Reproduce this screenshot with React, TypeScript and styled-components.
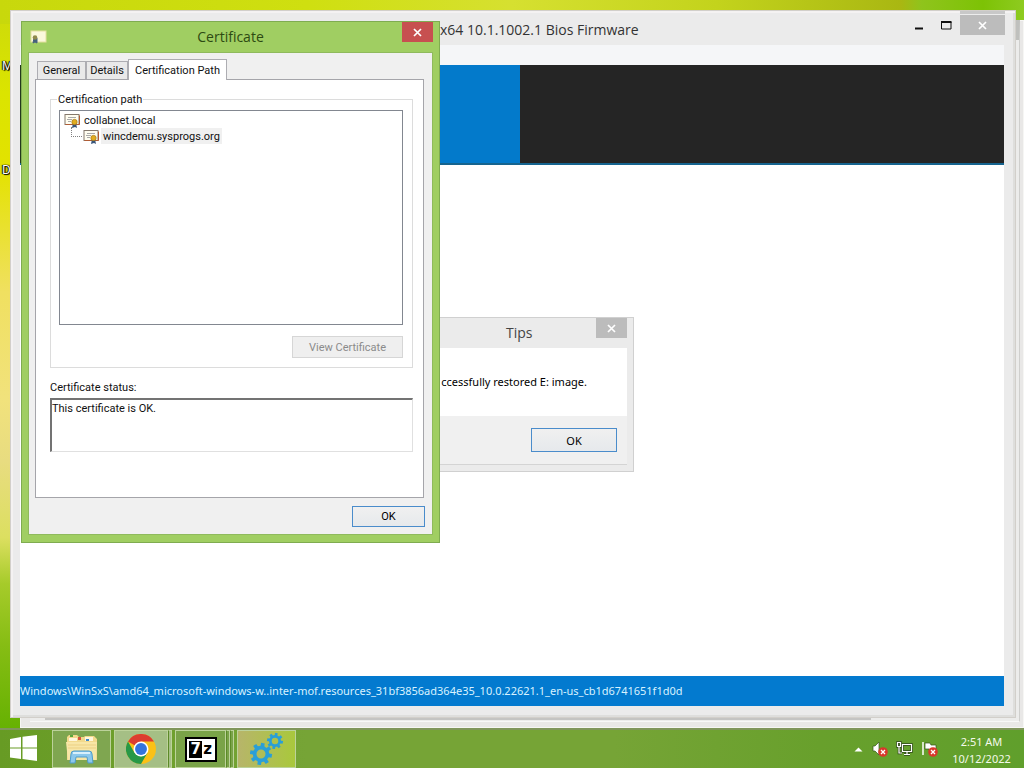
import React from "react";
import styled, { createGlobalStyle } from "styled-components";

const Global = createGlobalStyle`
  * { box-sizing: border-box; }
  html, body { margin: 0; height: 100%; }
  body { font-family: "Noto Sans", sans-serif; color: #111; overflow: hidden; }
  button { font-family: inherit; }
`;

const Desktop = styled.div`
  height: 100vh;
  display: flex;
  flex-direction: column;
  background: linear-gradient(180deg, #cbd90c 0%, #dbe400 12%, #e3e200 22%, #f0e060 38%, #f1e27c 52%, #e8dc80 60%, #dcdf60 70%, #a6cb2a 76%, #86bd14 84%, #63b000 96%);
`;

const Workspace = styled.main`
  position: relative;
  flex: 1;
  min-height: 0;
  overflow: hidden;
`;

const SkyBand = styled.div`
  height: 24px;
  background: linear-gradient(90deg, #c8d80c 0%, #cfdf10 30%, #d6e030 50%, #c3d31c 70%, #a9b712 88%, #8fc41c 90%, #7dc205 96%, #8ecb20 100%);
`;

const ShortcutLabel = styled.span<{ $top: number }>`
  position: absolute;
  left: 2px;
  top: ${(p) => p.$top}px;
  font-size: 12px;
  line-height: 14px;
  color: #fff;
  text-shadow: 0 0 1px #000, 1px 1px 1px #000, -1px 0 1px #000, 1px 0 1px #000;
`;

const BackWindow = styled.div`
  position: absolute;
  left: 20px;
  right: 0;
  top: 20px;
  bottom: 0;
  background: #e9e8e7;
  border: 1px solid #f6f6f4;
`;

const MiddleWindow = styled.div`
  position: absolute;
  left: 30px;
  right: 4px;
  top: 20px;
  bottom: 6px;
  border-right: 1px solid #cfcfcd;
  border-bottom: 1px solid #f8f8f8;
  border-top: 20px solid #bfc0bd;
  background: #ececeb;
`;

const ShadowBar = styled.div`
  position: absolute;
  left: 45px;
  right: 153px;
  bottom: 8px;
  height: 3px;
  background: #c4c4c2;
`;

const AppWindow = styled.section`
  position: absolute;
  left: 10px;
  right: 8px;
  top: 10px;
  bottom: 10px;
  display: flex;
  flex-direction: column;
  padding: 0 11px 11px 9px;
  border: 1px solid #d2cfca;
  background: #ebebeb;
  box-shadow: inset 2px 2px 0 #f4f2f2, inset -2px -2px 0 #dededc;
`;

const TitleBar = styled.header`
  display: flex;
  height: 34px;
  margin-right: -1px;
  align-items: flex-start;
`;

const AppTitle = styled.h1`
  margin: 0;
  flex: 1;
  padding-left: 420px;
  font-size: 14px;
  line-height: 38px;
  font-weight: 400;
  font-family: "Open Sans", sans-serif;
  color: #333;
  white-space: nowrap;
`;

const CaptionButton = styled.button<{ $close?: boolean }>`
  display: grid;
  place-items: center;
  width: ${(p) => (p.$close ? 45 : 27)}px;
  height: 24px;
  padding: 5px 0 0;
  border: 0;
  background: ${(p) => (p.$close ? "linear-gradient(#c8c8c8 3px, #ececec 3px, #ececec 4px, #bcbcbc 4px)" : "transparent")};
`;

const MenuStrip = styled.div`
  height: 20px;
  background: #f5f6f8;
`;

const Banner = styled.div`
  display: flex;
  height: 100px;
  border-bottom: 2px solid #16648f;
  background: #252525;
`;

const BannerTile = styled.div`
  width: 500px;
  border-left: 2px solid #24381c;
  background: #037acb;
`;

const Content = styled.div`
  flex: 1;
  background: #fff;
`;

const StatusBar = styled.footer`
  height: 30px;
  background: #037acf;
  color: #d8f2ff;
  font-size: 11px;
  line-height: 30px;
  white-space: nowrap;
`;

const TipsWindow = styled.section`
  position: absolute;
  left: 406px;
  top: 317px;
  width: 228px;
  border: 1px solid #d0d0d0;
  padding: 0 6px 6px;
  background: #ebebeb;
`;

const TipsTitle = styled.header`
  display: flex;
  height: 30px;
  justify-content: flex-end;
`;

const TipsHeading = styled.h2`
  flex: 1;
  margin: 0;
  padding-left: 93px;
  font-family: "Open Sans", sans-serif;
  font-size: 14px;
  line-height: 30px;
  font-weight: 400;
  color: #444;
`;

const SmallClose = styled.button<{ $active?: boolean }>`
  display: grid;
  place-items: center;
  width: 31px;
  height: 20px;
  padding: 0;
  border: 0;
  background: ${(p) => (p.$active ? "#c75050" : "#bcbcbc")};
`;

const TipsMessage = styled.p`
  margin: 0;
  height: 68px;
  padding-right: 40px;
  text-align: right;
  background: #fff;
  color: #000;
  font-size: 11px;
  line-height: 68px;
  white-space: nowrap;
`;

const TipsActions = styled.div`
  display: flex;
  justify-content: flex-end;
  height: 49px;
  padding: 12px 10px;
  background: #f0f0f0;
  border-bottom: 1px solid #d4d4d4;
`;

const PushButton = styled.button<{ $width: number; $height: number }>`
  width: ${(p) => p.$width}px;
  height: ${(p) => p.$height}px;
  padding: 0;
  border: 1px solid #4a8ccb;
  background: linear-gradient(#f0f0f0, #e6e9ec);
  font-size: 11px;
  color: #000;
  &:disabled {
    border-color: #d6d6d6;
    background: #efefef;
    color: #8b8b8b;
  }
`;

const CertWindow = styled.section`
  position: absolute;
  left: 21px;
  top: 21px;
  width: 419px;
  border: 1px solid #7fac50;
  padding: 0 6px 7px;
  background: #a0ce62;
  font-family: Roboto, "Noto Sans", sans-serif;
  font-size: 11px;
`;

const CertTitleBar = styled.header`
  display: flex;
  height: 30px;
  padding-left: 2px;
  align-items: center;
`;

const CertHeading = styled.h2`
  flex: 1;
  margin: 0;
  padding-left: 12px;
  font-family: "Open Sans", sans-serif;
  font-size: 14px;
  font-weight: 400;
  line-height: 30px;
  text-align: center;
  color: #2d4a12;
`;

const CloseSlot = styled.div`
  align-self: flex-start;
`;

const CertBody = styled.div`
  padding: 6px 7px 7px 6px;
  border: 1px solid #8fba5c;
  background: #f0f0f0;
`;

const Tabs = styled.div`
  display: flex;
  align-items: flex-end;
  height: 20px;
  padding-left: 2px;
`;

const Tab = styled.button<{ $selected?: boolean; $width: number }>`
  width: ${(p) => p.$width}px;
  height: ${(p) => (p.$selected ? 21 : 18)}px;
  margin-bottom: ${(p) => (p.$selected ? -1 : 0)}px;
  padding: 0;
  border: 1px solid #adadb2;
  border-bottom: 0;
  background: ${(p) => (p.$selected ? "#fff" : "#e9e9e9")};
  color: #111;
  font-size: 11px;
  line-height: 17px;
  white-space: nowrap;
`;

const TabPanel = styled.div`
  height: 419px;
  margin-right: 1px;
  padding: 12px 10px 0 14px;
  border: 1px solid #a5a5aa;
  background: #fff;
`;

const PathGroup = styled.fieldset`
  margin: 0;
  height: 276px;
  padding: 4px 9px 0 8px;
  border: 1px solid #dcdcdc;
  display: flex;
  flex-direction: column;
  align-items: flex-end;
`;

const Legend = styled.legend`
  margin-left: -2px;
  padding: 1px 1px 0;
  line-height: 13px;
`;

const Tree = styled.ul`
  width: 100%;
  height: 215px;
  margin: 0 0 11px;
  padding: 1px 4px;
  border: 1px solid #828790;
  list-style: none;
`;

const TreeItem = styled.li`
  display: flex;
  align-items: center;
  height: 16px;
  gap: 1px;
`;

const TreeLabel = styled.span<{ $selected?: boolean }>`
  padding: 1px 2px 0;
  line-height: 15px;
  background: ${(p) => (p.$selected ? "#f0f0f0" : "transparent")};
`;

const TreeLine = styled.span`
  width: 11px;
  height: 10px;
  margin: 0 0 8px 7px;
  border-left: 1px dotted #808080;
  border-bottom: 1px dotted #808080;
`;

const StatusLabel = styled.label`
  display: block;
  margin-top: 12px;
  line-height: 16px;
`;

const StatusBox = styled.textarea`
  display: block;
  width: 100%;
  height: 54px;
  margin-top: 2px;
  padding: 1px 0 0;
  border: 1px solid #e0e0e0;
  border-top: 2px solid #737373;
  border-left: 2px solid #737373;
  background: #fff;
  color: #111;
  resize: none;
  font-family: inherit;
  font-size: 11px;
  line-height: 15px;
`;

const DialogActions = styled.div`
  display: flex;
  justify-content: flex-end;
  padding-top: 8px;
`;

const Taskbar = styled.nav`
  display: flex;
  height: 40px;
  flex: none;
  border-top: 2px solid #80965c;
  background: linear-gradient(90deg, #679b24 0%, #76a436 30%, #76a436 60%, #68a02c 80%, #609f2c 100%);
`;

const StartButton = styled.button`
  display: grid;
  place-items: center;
  width: 50px;
  border: 0;
  padding: 0 3px 3px 0;
  background: transparent;
`;

const TaskGroup = styled.div`
  display: flex;
`;

const TaskButton = styled.button<{ $tone: string; $width: number }>`
  display: grid;
  place-items: center;
  width: ${(p) => p.$width}px;
  height: 38px;
  padding: 0;
  border: 1px solid #bcd29a;
  background: ${(p) => p.$tone};
`;

const StackEdge = styled.span<{ $tone: string }>`
  width: 4px;
  height: 38px;
  border: 1px solid #bcd29a;
  border-left-color: #5c8a28;
  background: ${(p) => p.$tone};
`;

const TaskList = styled.div`
  display: flex;
  flex: 1;
  gap: 3px;
  padding-left: 2px;
`;

const Tray = styled.div`
  display: flex;
  align-items: center;
  gap: 8px;
`;

const Clock = styled.time`
  width: 78px;
  padding: 1px 7px 0 0;
  text-align: center;
  font-size: 11px;
  line-height: 17px;
  color: #f4f9ea;
  white-space: nowrap;
`;

const Cross = ({ size }: { size: number }) => (
  <svg width={size} height={size} viewBox="0 0 9 9" aria-hidden="true">
    <path d="M1 1l7 7M8 1l-7 7" stroke="#fff" strokeWidth="1.7" />
  </svg>
);

const CertificateIcon = () => (
  <svg width="17" height="16" viewBox="0 0 17 16" aria-hidden="true">
    <rect x="1" y="2.500" width="14" height="10" fill="#fffdf0" stroke="#84786c" />
    <path d="M1.500 12.500h14v-9" fill="none" stroke="#b05c34" />
    <path d="M4 5.500h8M3 7.500h5M4 9.500h3" stroke="#a9a9a9" />
    <path d="M9 11l-1 5 3-1 2 1-1-5z" fill="#39557c" />
    <circle cx="10.500" cy="10" r="2.700" fill="#e2ad20" stroke="#9c7212" strokeWidth=".6" />
  </svg>
);

const TitleCertificateIcon = () => (
  <svg width="17" height="14" viewBox="0 0 17 14" aria-hidden="true">
    <rect x="1" y="1" width="15" height="11" fill="#fbf8dc" stroke="#e5e0a0" />
    <path d="M4 8l-1 5 2-1 2 1v-5z" fill="#44607c" stroke="#44607c" />
    <circle cx="5" cy="7.500" r="2.300" fill="#8f8a4c" />
  </svg>
);

const WindowsLogo = () => (
  <svg width="27" height="26" viewBox="0 0 27 26" aria-hidden="true">
    <path d="M0 4l11-2v10.500H0zM12.500 1.700L27 0v12.500H12.500zM0 13.500h11V24L0 22.500zM12.500 13.500H27V26l-14.500-2z" fill="#fff" />
  </svg>
);

const ExplorerIcon = () => (
  <svg width="34" height="30" viewBox="0 0 34 30" aria-hidden="true">
    <path d="M2 3l2-2h8l2 2h5l1-1h9l3 3v21H2z" fill="#f2d98c" />
    <path d="M4 4h8v3H4zM20 3h8v4h-8z" fill="#fff6dc" />
    <path d="M13 3h3v3h-3z" fill="#d6543c" />
    <path d="M5 1h3v2H5z" fill="#58a63c" />
    <path d="M21 5h3v2h-3z" fill="#3f88c8" />
    <path d="M1 8h31l-1 18H3z" fill="#f8e6a6" />
    <path d="M3 11h28M3 14h28" stroke="#ecd083" />
    <path d="M5 29l1-9q0-3 3-3h15q3 0 3 3l1 9h-5l-1-6H11l-1 6z" fill="#8cc8ec" stroke="#4f9cca" />
    <path d="M8 19h17" stroke="#d8f0fc" strokeWidth="2" />
  </svg>
);

const ChromeIcon = () => (
  <svg width="30" height="30" viewBox="0 0 48 48" aria-hidden="true">
    <circle cx="24" cy="24" r="24" fill="#fbc116" />
    <path d="M24 24L3.200 12A24 24 0 0 1 44.800 12H24z" fill="#dc3d30" />
    <path d="M3.200 12A24 24 0 0 0 24 48l10.400-18-10.400 6-10.400-6z" fill="#279847" />
    <circle cx="24" cy="24" r="12" fill="#fff" />
    <circle cx="24" cy="24" r="9.500" fill="#3474dd" />
  </svg>
);

const SevenZip = styled.span`
  display: flex;
  align-items: center;
  justify-content: center;
  gap: 1px;
  width: 32px;
  height: 25px;
  border: 2px solid #000;
  background: #fff;
  color: #000;
  font: 700 15px/17px "DejaVu Sans", sans-serif;
`;

const Seven = styled.span`
  width: 13px;
  background: #000;
  color: #fff;
`;

const teeth = [0, 45, 90, 135, 180, 225, 270, 315];

const Gear = ({ x, y, r }: { x: number; y: number; r: number }) => (
  <g transform={`translate(${x} ${y})`}>
    {teeth.map((a) => (
      <rect key={a} x={-r * 0.17} y={-r} width={r * 0.34} height={r * 0.4} fill="#2a9fd8" transform={`rotate(${a + 10})`} />
    ))}
    <circle r={r * 0.58} fill="none" stroke="#2a9fd8" strokeWidth={r * 0.34} />
  </g>
);

const GearsIcon = () => (
  <svg width="34" height="32" viewBox="0 0 34 32" aria-hidden="true">
    <Gear x={11} y={21} r={11} />
    <Gear x={25} y={8} r={8} />
  </svg>
);

const ErrorBadge = () => (
  <g>
    <circle cx="12" cy="11" r="4.800" fill="#d8382c" />
    <path d="M10 9l4 4M14 9l-4 4" stroke="#fff" strokeWidth="1.300" />
  </g>
);

const SpeakerIcon = () => (
  <svg width="17" height="16" viewBox="0 0 17 16" aria-hidden="true">
    <path d="M2 5h2l4-4v13l-4-4H2z" fill="#fff" stroke="#35541b" strokeWidth=".7" />
    <ErrorBadge />
  </svg>
);

const networkPath = "M6.500 3.500h9v7h-9zM8 13.500h6M11 11v2M1.500 1.500h3v4h-3zM3 6v6h3";

const NetworkIcon = () => (
  <svg width="17" height="16" viewBox="0 0 17 16" aria-hidden="true">
    <path d={networkPath} fill="none" stroke="#2e4619" strokeWidth="2.600" />
    <path d={networkPath} fill="none" stroke="#fff" strokeWidth="1.200" />
  </svg>
);

const FlagIcon = () => (
  <svg width="17" height="16" viewBox="0 0 17 16" aria-hidden="true">
    <path d="M2 1v13" stroke="#fff" strokeWidth="1.500" />
    <path d="M4 2h5l1 2h5v6H9L8 8H4z" fill="#fff" stroke="#35541b" strokeWidth=".7" />
    <ErrorBadge />
  </svg>
);

const ArrowIcon = () => (
  <svg width="9" height="5" viewBox="0 0 9 5" aria-hidden="true">
    <path d="M0.500 4.500l4-4 4 4z" fill="#fff" />
  </svg>
);

export default function App() {
  return (
    <Desktop>
      <Global />
      <Workspace>
        <SkyBand />
        <ShortcutLabel $top={59}>M</ShortcutLabel>
        <ShortcutLabel $top={163}>D</ShortcutLabel>
        <BackWindow />
        <MiddleWindow />
        <ShadowBar />
        <AppWindow>
          <TitleBar>
            <AppTitle>x64 10.1.1002.1 Bios Firmware</AppTitle>
            <CaptionButton aria-label="Minimize">
              <svg width="9" height="8"><path d="M0 6.500h8" stroke="#111" strokeWidth="2" /></svg>
            </CaptionButton>
            <CaptionButton aria-label="Maximize">
              <svg width="11" height="9"><path d="M.5 1v7h9.500v-7" fill="none" stroke="#111" /><path d="M0 1h10.500" stroke="#111" strokeWidth="2" /></svg>
            </CaptionButton>
            <CaptionButton $close aria-label="Close"><Cross size={9} /></CaptionButton>
          </TitleBar>
          <MenuStrip />
          <Banner><BannerTile /></Banner>
          <Content />
          <StatusBar>Windows\WinSxS\amd64_microsoft-windows-w..inter-mof.resources_31bf3856ad364e35_10.0.22621.1_en-us_cb1d6741651f1d0d</StatusBar>
        </AppWindow>

        <TipsWindow>
          <TipsTitle>
            <TipsHeading>Tips</TipsHeading>
            <SmallClose aria-label="Close tips"><Cross size={9} /></SmallClose>
          </TipsTitle>
          <TipsMessage>ccessfully restored E: image.</TipsMessage>
          <TipsActions><PushButton $width={86} $height={24}>OK</PushButton></TipsActions>
        </TipsWindow>

        <CertWindow>
          <CertTitleBar>
            <TitleCertificateIcon />
            <CertHeading>Certificate</CertHeading>
            <CloseSlot><SmallClose $active aria-label="Close certificate"><Cross size={9} /></SmallClose></CloseSlot>
          </CertTitleBar>
          <CertBody>
            <Tabs role="tablist">
              <Tab role="tab" $width={49}>General</Tab>
              <Tab role="tab" $width={42}>Details</Tab>
              <Tab role="tab" aria-selected="true" $selected $width={99}>Certification Path</Tab>
            </Tabs>
            <TabPanel role="tabpanel">
              <PathGroup>
                <Legend>Certification path</Legend>
                <Tree>
                  <TreeItem><CertificateIcon /><TreeLabel>collabnet.local</TreeLabel></TreeItem>
                  <TreeItem><TreeLine /><CertificateIcon /><TreeLabel $selected>wincdemu.sysprogs.org</TreeLabel></TreeItem>
                </Tree>
                <PushButton disabled $width={111} $height={22}>View Certificate</PushButton>
              </PathGroup>
              <StatusLabel htmlFor="status">Certificate status:</StatusLabel>
              <StatusBox id="status" readOnly value="This certificate is OK." />
            </TabPanel>
            <DialogActions><PushButton $width={73} $height={21}>OK</PushButton></DialogActions>
          </CertBody>
        </CertWindow>
      </Workspace>

      <Taskbar>
        <StartButton aria-label="Start"><WindowsLogo /></StartButton>
        <TaskList>
          <TaskButton $tone="#7fa650" $width={59} aria-label="File Explorer"><ExplorerIcon /></TaskButton>
          <TaskGroup>
            <TaskButton $tone="#a5bf85" $width={54} aria-label="Chrome"><ChromeIcon /></TaskButton>
            <StackEdge $tone="#a5bf85" />
          </TaskGroup>
          <TaskGroup>
            <TaskButton $tone="#7aa348" $width={51} aria-label="7-Zip"><SevenZip><Seven>7</Seven>z</SevenZip></TaskButton>
            <StackEdge $tone="#7aa348" />
            <StackEdge $tone="#7aa348" />
          </TaskGroup>
          <TaskButton $tone="linear-gradient(90deg, #b7b56a, #a9c83c)" $width={59} aria-label="Setup"><GearsIcon /></TaskButton>
        </TaskList>
        <Tray>
          <ArrowIcon />
          <SpeakerIcon />
          <NetworkIcon />
          <FlagIcon />
          <Clock>2:51 AM<br />10/12/2022</Clock>
        </Tray>
      </Taskbar>
    </Desktop>
  );
}
